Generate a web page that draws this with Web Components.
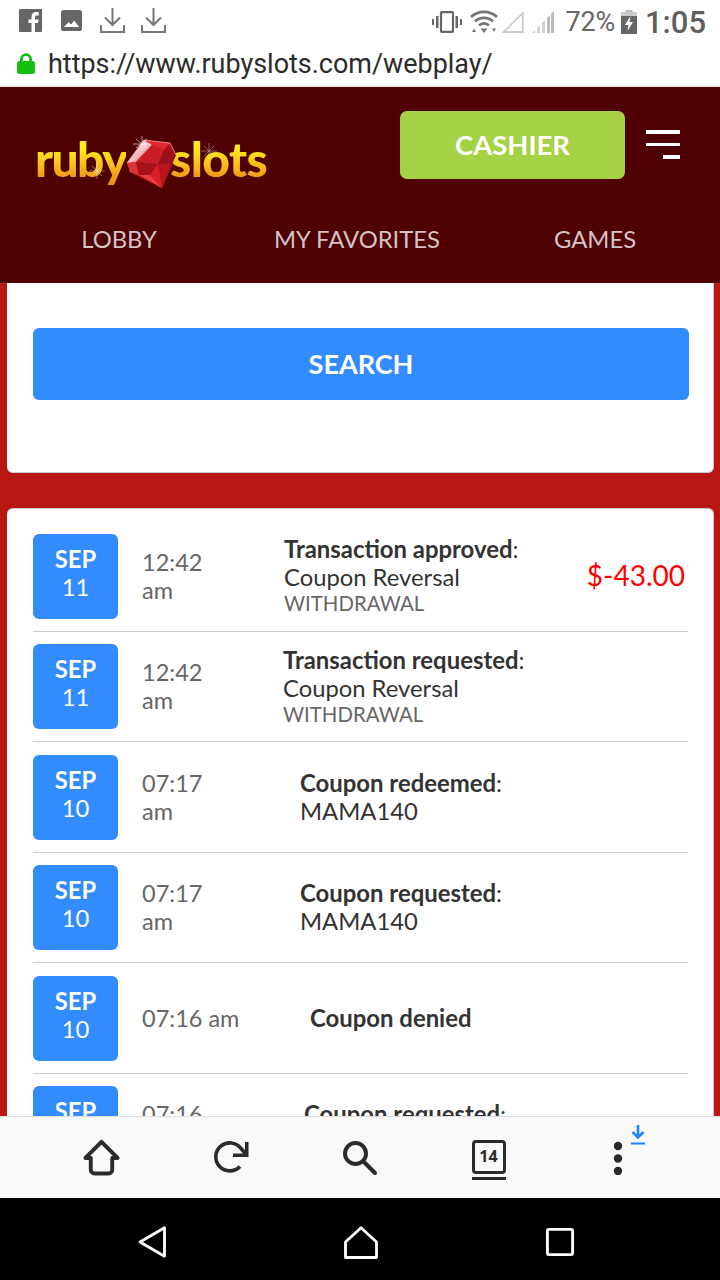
<!DOCTYPE html>
<html lang="en">
<head>
<meta charset="utf-8">
<title>Ruby Slots</title>
<style>
html, body { margin: 0; padding: 0; background: #000; overflow: hidden; }
</style>
</head>
<body>
<app-shell>
  <status-bar></status-bar>
  <url-bar url="https://www.rubyslots.com/webplay/"></url-bar>
  <site-header></site-header>
  <page-content>
    <search-card></search-card>
    <history-card>
      <history-row month="SEP" day="11" time="12:42 am" style="--desc:166px">
        <span slot="title"><b>Transaction approved</b>:</span>
        <span slot="detail">Coupon Reversal</span>
        <span slot="kind">WITHDRAWAL</span>
        <span slot="amount">$-43.00</span>
      </history-row>
      <history-row month="SEP" day="11" time="12:42 am" style="--desc:165px">
        <span slot="title"><b>Transaction requested</b>:</span>
        <span slot="detail">Coupon Reversal</span>
        <span slot="kind">WITHDRAWAL</span>
      </history-row>
      <history-row month="SEP" day="10" time="07:17 am" style="--desc:182px">
        <span slot="title"><b>Coupon redeemed</b>:</span>
        <span slot="detail">MAMA140</span>
      </history-row>
      <history-row month="SEP" day="10" time="07:17 am" style="--desc:182px">
        <span slot="title"><b>Coupon requested</b>:</span>
        <span slot="detail">MAMA140</span>
      </history-row>
      <history-row month="SEP" day="10" time="07:16 am" oneline style="--desc:192px">
        <span slot="title"><b>Coupon denied</b></span>
      </history-row>
      <history-row month="SEP" day="10" time="07:16 am" style="--desc:186px">
        <span slot="title"><b>Coupon requested</b>:</span>
        <span slot="detail">MAMA140</span>
      </history-row>
    </history-card>
  </page-content>
  <browser-bar></browser-bar>
  <nav-bar></nav-bar>
</app-shell>

<script>
function define(name, html) {
	customElements.define(name, class extends HTMLElement {
		constructor() {
			super();
			this.attachShadow({ mode: "open" }).innerHTML = html;
		}
	});
}

define("app-shell", `<style>
:host { display: flex; flex-direction: column; width: 720px; height: 1280px; overflow: hidden; font-family: Lato, sans-serif; }
</style><slot></slot>`);

define("status-bar", `<style>
:host { display: flex; align-items: center; height: 44px; flex: none; background: #fff; color: #666; font-family: Roboto, sans-serif; padding: 0 14px 0 19px; box-sizing: border-box; }
svg { display: block; flex: none; }
.left { display: flex; align-items: center; gap: 17px; margin-top: -3px; }
.right { margin-left: auto; display: flex; align-items: center; }
.pct { font-size: 27px; margin: 0 6px 0 11px; letter-spacing: -.2px; }
.clock { font-size: 31px; font-weight: 500; margin-left: 8px; color: #5f5f5f; }
</style>
<div class="left">
  <svg width="23" height="23" viewBox="0 0 23 23"><path fill="#666" d="M1 0h21a1 1 0 0 1 1 1v21a1 1 0 0 1-1 1h-6v-9h3l.5-3.6H16V8.300c0-1 .4-1.700 1.800-1.700h2V3.300c-.5 0-1.500-.2-2.700-.2-2.700 0-4.600 1.700-4.600 4.700v2.600H9.400V14h3.100v9H1a1 1 0 0 1-1-1V1a1 1 0 0 1 1-1z"/></svg>
  <svg width="21" height="21" viewBox="0 0 21 21" style="margin-left:2px"><path fill="#666" d="M2.500 0h16A2.500 2.500 0 0 1 21 2.500v16a2.500 2.500 0 0 1-2.500 2.500h-16A2.500 2.500 0 0 1 0 18.500v-16A2.500 2.500 0 0 1 2.500 0zM3 17h15l-4.700-6.500-3.300 4-2.300-2.500z"/></svg>
  <svg width="25" height="25" viewBox="0 0 25 25" style="margin-left:1px"><path fill="none" stroke="#777" stroke-width="2" d="M12.500 0v16M5 9.500l7.500 7.500L20 9.500M1 17v7h23v-7"/></svg>
  <svg width="25" height="25" viewBox="0 0 25 25" style="margin-left:-1px"><path fill="none" stroke="#777" stroke-width="2" d="M12.500 0v16M5 9.500l7.500 7.500L20 9.500M1 17v7h23v-7"/></svg>
</div>
<div class="right">
  <svg width="30" height="22" viewBox="0 0 30 22"><path fill="none" stroke="#666" stroke-width="2.200" d="M10 1.100h10a1 1 0 0 1 1 1v17.800a1 1 0 0 1-1 1H10a1 1 0 0 1-1-1V2.100a1 1 0 0 1 1-1z"/><path fill="#666" d="M4 5h2.500v12H4zM23.500 5H26v12h-2.500zM0 8h2v6H0zM28 8h2v6h-2z"/></svg>
  <svg width="28" height="24" viewBox="0 0 28 24" style="margin-left:8px"><g fill="none" stroke="#777" stroke-width="2.700"><path d="M1 7a19 19 0 0 1 26 0"/><path d="M5 11.500a13 13 0 0 1 18 0"/><path d="M9 15.500a7 7 0 0 1 10 0"/></g><path fill="#777" d="M14 23l-3.500-4.500h7zM2 22l2-3.500 2 3.500zM22 18.500h4l-2 3.500z"/></svg>
  <svg width="22" height="22" viewBox="0 0 22 22" style="margin-left:4px"><path fill="none" stroke="#ccc" stroke-width="1.800" d="M1.500 21h19.300V2.200z"/></svg>
  <svg width="22" height="22" viewBox="0 0 22 22" style="margin-left:8px"><path fill="#d0d0d0" d="M0 22l3-3v3zM5 17l3-3v8H5zM10 12l3-3v13h-3z"/><path fill="#bbb" d="M15 7l3-3v18h-3zM19 3l3-3v22h-3z"/></svg>
  <span class="pct">72%</span>
  <svg width="16" height="24" viewBox="0 0 16 24"><path fill="#bbb" d="M4.500 0h7v2h-7z"/><path fill="#666" d="M0 2h16v22H0z"/><path fill="#ccc" d="M0 2h16v4H0z"/><path fill="#fff" d="M9.500 6L4 15h3.500l-1 6L12 12H8.500z"/></svg>
  <span class="clock">1:05</span>
</div>`);

customElements.define("url-bar", class extends HTMLElement {
	constructor() {
		super();
		this.attachShadow({ mode: "open" }).innerHTML = `<style>
:host { display: flex; align-items: center; flex: none; height: 43px; box-sizing: border-box; background: #fff; border-bottom: 1px solid #ddd; padding: 0 0 3px 17px; font-family: Roboto, sans-serif; }
span { font-size: 26.950px; color: #2b2b2b; margin-left: 13px; }
svg { display: block; flex: none; }
</style>
<svg width="18" height="21" viewBox="0 0 18 21"><path fill="none" stroke="#14bf0c" stroke-width="2.800" d="M4.400 10V6.200a4.600 4.600 0 0 1 9.200 0V10"/><rect x="0" y="8" width="18" height="13" rx="2.500" fill="#14bf0c"/></svg>
<span>${this.getAttribute("url")}</span>`;
	}
});

define("site-logo", `<style>
:host { display: flex; align-items: flex-start; width: 240px; height: 52px; position: relative; }
.word { font: 900 48px/60px Lato, sans-serif; margin-top: -10.500px; background: linear-gradient(180deg, #ffec1a 32%, #fdc51e 55%, #ef9218 84%); -webkit-background-clip: text; background-clip: text; color: transparent; }
.ruby { letter-spacing: -1.600px; }
.slots { letter-spacing: -.6px; }
.gem { display: block; flex: none; margin: -4px -8px 0 -4px; position: relative; }
.spark { position: absolute; }
</style>
<span class="word ruby">ruby</span>
<svg class="gem" width="56" height="56" viewBox="0 0 56 56">
  <defs><linearGradient id="hi" x1="0" y1="0" x2="1" y2="1"><stop offset="0" stop-color="#fff"/><stop offset=".55" stop-color="#f1b9c0"/><stop offset="1" stop-color="#d62a33"/></linearGradient></defs>
  <polygon points="5,28 22,5 48,8 54,20 40,53 8,37" fill="#c5181e"/>
  <polygon points="5,28 22,5 30,10 14,27" fill="url(#hi)"/>
  <polygon points="22,5 48,8 42,15 30,10" fill="#dc2b30"/>
  <polygon points="48,8 54,20 42,15" fill="#a71017"/>
  <polygon points="30,10 42,15 36,29 14,27" fill="#c91e25"/>
  <polygon points="42,15 54,20 50,29 36,29" fill="#97101a"/>
  <polygon points="5,28 14,27 17,40 8,37" fill="#d8343a"/>
  <polygon points="14,27 36,29 28,40 17,40" fill="#a81219"/>
  <polygon points="36,29 50,29 40,53" fill="#b8141d"/>
  <polygon points="17,40 28,40 40,53" fill="#e8403f"/>
  <polygon points="28,40 36,29 40,53" fill="#d72126"/>
  <path d="M22 5L48 8 54 20M5 28L22 5" fill="none" stroke="#f5a0a5" stroke-width=".8"/>
  <path d="M20 1v15M11 9h18M14 4l11 9M25 4L14 13" stroke="#fff" stroke-width=".7" opacity=".85"/>
</svg>
<span class="word slots">slots</span>
<svg class="spark" style="left:54px;top:24px" width="16" height="16" viewBox="0 0 16 16"><path d="M8 0v16M0 8h16M3 3l10 10M13 3L3 13" stroke="#fff" stroke-width=".6" opacity=".7"/></svg>
<svg class="spark" style="left:166px;top:4px" width="16" height="16" viewBox="0 0 16 16"><path d="M8 0v16M0 8h16M3 3l10 10M13 3L3 13" stroke="#fff" stroke-width=".6" opacity=".6"/></svg>`);

define("site-header", `<style>
:host { display: block; flex: none; height: 196px; background: #4f0000; box-sizing: border-box; padding-top: 24px; position: relative; z-index: 1; }
.top { display: flex; height: 68px; }
site-logo { margin: 28px 0 0 35px; }
.cashier { margin-left: 125px; width: 225px; height: 67px; padding-bottom: 1px; border-radius: 7px; background: #a5d244; color: #fff; font-size: 27.400px; font-weight: 700; display: flex; align-items: center; justify-content: center; }
.burger { margin: 19px 0 0 21px; width: 34px; display: flex; flex-direction: column; align-items: flex-end; gap: 9px; }
.burger i { display: block; width: 34px; height: 3.500px; background: #fff; }
.burger i:last-child { width: 17px; }
nav { display: grid; grid-template-columns: repeat(3, 238px); margin-top: 40px; height: 40px; align-items: center; text-align: center; font-size: 23.800px; color: #d5c2c6; }
</style>
<div class="top">
  <site-logo></site-logo>
  <div class="cashier">CASHIER</div>
  <div class="burger"><i></i><i></i><i></i></div>
</div>
<nav><span>LOBBY</span><span>MY FAVORITES</span><span>GAMES</span></nav>`);

define("page-content", `<style>
:host { display: block; flex: 1; min-height: 0; overflow: hidden; background: #b91714; padding: 0 6px 0 7px; }
</style><slot></slot>`);

define("search-card", `<style>
:host { display: block; background: #fff; border-radius: 0 0 6px 6px; border: 1px solid #ccc; border-width: 0 1px 1px 0; padding: 45px 24px 72px 26px; margin-bottom: 35px; }
.btn { height: 70px; padding-bottom: 2px; border-radius: 6px; background: #328bff; color: #fff; font-size: 27px; font-weight: 700; display: flex; align-items: center; justify-content: center; }
</style><div class="btn">SEARCH</div>`);

define("history-card", `<style>
:host { display: block; background: #fff; border-radius: 6px; border: 1px solid #ccc; border-width: 1px 1px 0 0; padding: 24.500px 25px 0 26px; }
</style><slot></slot>`);

customElements.define("history-row", class extends HTMLElement {
	constructor() {
		super();
		let [clock, ampm] = this.getAttribute("time").split(" ");
		this.attachShadow({ mode: "open" }).innerHTML = `<style>
:host { display: grid; grid-template-columns: 85px var(--desc) 1fr auto; align-items: center; padding: 12.500px 3px 12px 0; border-bottom: 1px solid #ccc; color: #333; }
:host(:first-child) { padding-top: 0; }
.date { width: 85px; height: 85px; box-sizing: border-box; padding-bottom: 6px; border-radius: 6px; background: #328bff; color: #fff; display: flex; flex-direction: column; align-items: center; justify-content: center; }
.month { font-size: 23.800px; font-weight: 700; line-height: 28px; }
.day { font-size: 23.800px; line-height: 29px; }
.time { padding: 0 0 1px 24px; font-size: 23.500px; line-height: 28px; color: #666; }
:host([oneline]) .time br { display: none; }
.desc { display: flex; flex-direction: column; padding-bottom: 1px; }
::slotted([slot=title]) { font-size: 23.900px; line-height: 28px; }
::slotted([slot=detail]) { font-size: 23.800px; line-height: 28px; }
::slotted([slot=kind]) { font-size: 20.400px; line-height: 25px; color: #666; }
::slotted([slot=amount]) { font-size: 28px; color: #f00; padding-bottom: 3px; }
</style>
<div class="date"><span class="month">${this.getAttribute("month")}</span><span class="day">${this.getAttribute("day")}</span></div>
<div class="time">${clock}<br> ${ampm}</div>
<div class="desc"><slot name="title"></slot><slot name="detail"></slot><slot name="kind"></slot></div>
<slot name="amount"></slot>`;
	}
});

define("browser-bar", `<style>
:host { display: grid; grid-template-columns: repeat(5, 129px); align-items: center; justify-items: center; flex: none; height: 82px; box-sizing: border-box; padding: 0 38px 0 37px; background: #f9f9f9; border-top: 1px solid #ddd; position: relative; z-index: 1; }
svg { display: block; }
.tab { width: 34px; height: 34px; margin-top: -2px; position: relative; box-sizing: border-box; border: 3.500px solid #2a2a2a; border-radius: 4px; font: 700 16px/27px 'Open Sans', sans-serif; color: #2a2a2a; text-align: center; }
.tab i { position: absolute; left: -3px; right: -3px; bottom: -9px; height: 2.500px; background: #2a2a2a; }
.menu { position: relative; }
.badge { position: absolute; left: 18px; top: -16px; }
</style>
<svg width="37" height="37" viewBox="0 0 38 38"><path fill="none" stroke="#2a2a2a" stroke-width="4" stroke-linejoin="round" stroke-linecap="round" d="M2.500 19.500L19 3l16.500 16.500h-5.500v12a4 4 0 0 1-4 4H12a4 4 0 0 1-4-4v-12z"/></svg>
<svg width="36" height="36" viewBox="0 0 36 36"><path fill="none" stroke="#2a2a2a" stroke-width="3.600" d="M27 26.500A14 14 0 1 1 28 8.500L33 14"/><path fill="#2a2a2a" d="M32 2h3.500v15H20v-3.500h12z"/></svg>
<svg width="36" height="36" viewBox="0 0 36 36"><circle cx="13.500" cy="13.500" r="10.500" fill="none" stroke="#2a2a2a" stroke-width="4"/><path stroke="#2a2a2a" stroke-width="4" stroke-linecap="round" d="M21 21l12 12"/></svg>
<div class="tab">14<i></i></div>
<div class="menu">
  <svg width="10" height="34" viewBox="0 0 10 34"><circle cx="5" cy="5" r="4.200" fill="#2a2a2a"/><circle cx="5" cy="17.500" r="4.200" fill="#2a2a2a"/><circle cx="5" cy="30" r="4.200" fill="#2a2a2a"/></svg>
  <svg class="badge" width="14" height="20" viewBox="0 0 14 20"><path fill="none" stroke="#1a85ff" stroke-width="2.600" d="M7 0v12M1.500 7L7 12.500 12.500 7"/><path fill="#1a85ff" d="M0 17.500h14V19.500H0z"/></svg>
</div>`);

define("nav-bar", `<style>
:host { display: flex; align-items: center; justify-content: space-between; flex: none; height: 82px; box-sizing: border-box; padding: 6px 146px 0 138px; background: #000; }
svg { display: block; }
</style>
<svg width="28" height="32" viewBox="0 0 28 32"><path fill="none" stroke="#fff" stroke-width="2.800" stroke-linejoin="round" d="M26.500 1.800v28.400L2 16z"/></svg>
<svg width="34" height="33" viewBox="0 0 34 33" style="margin-left:9px"><path fill="none" stroke="#fff" stroke-width="2.800" stroke-linejoin="round" d="M17 1.800L32.500 16v15.500h-31V16z"/></svg>
<svg width="28" height="28" viewBox="0 0 28 28"><rect x="1.400" y="1.400" width="25.200" height="25.200" rx="1.500" fill="none" stroke="#fff" stroke-width="2.800"/></svg>`);
</script>
</body>
</html>
